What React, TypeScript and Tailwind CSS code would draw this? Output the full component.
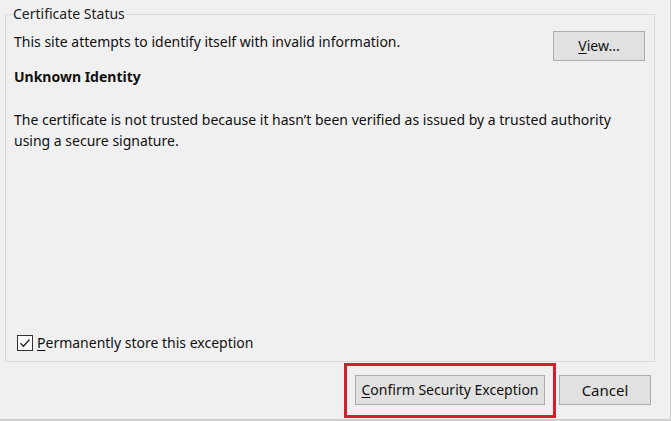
import React from "react";

function Btn({ children, className = "" }: { children: React.ReactNode; className?: string }) {
  return (
    <button
      className={`h-[30px] bg-[#e1e1e1] border border-[#adadad] text-[14px] leading-none text-[#111] whitespace-nowrap px-0 flex items-center justify-center ${className}`}
    >
      {children}
    </button>
  );
}

export default function App() {
  return (
    <div
      className="w-[671px] h-[421px] bg-[#f0f0f0] flex flex-col border-r border-b-2 border-[#cfcfcf] overflow-hidden text-[#111]"
      style={{ fontFamily: '"Noto Sans", "Open Sans", sans-serif' }}
    >
      <fieldset className="ml-[5px] mt-[4px] w-[650px] h-[358px] border border-[#d9d9d9] min-w-0">
        <legend className="ml-[6px] px-[1px] text-[14px] leading-[20px] text-[#222]">Certificate Status</legend>
        <div className="flex flex-col h-[337px] pl-[8px] pr-[9px]">
          <div className="flex justify-between items-start mt-[7px]">
            <div className="text-[14px] leading-[20px] mt-[1px]">
              This site attempts to identify itself with invalid information.
            </div>
            <Btn className="w-[92px]">
              <span>
                <u className="underline-offset-2">V</u>iew...
              </span>
            </Btn>
          </div>
          <div className="mt-[6px] text-[14px] leading-[20px] font-bold">Unknown Identity</div>
          <p className="mt-[22px] text-[14px] leading-[21px] w-[600px]">
            The certificate is not trusted because it hasn’t been verified as issued by a trusted authority using a
            secure signature.
          </p>
          <label className="mt-auto mb-[8px] ml-[3px] flex items-center gap-[4px] text-[14px] leading-[20px]">
            <span className="w-[16px] h-[16px] border border-[#333] bg-[#fafafa] flex items-center justify-center">
              <svg width="12" height="12" viewBox="0 0 12 12" fill="none">
                <path d="M1.5 6.2 L4.5 9.2 L10.5 2.5" stroke="#222" strokeWidth="1.3" />
              </svg>
            </span>
            <span>
              <u className="underline-offset-2">P</u>ermanently store this exception
            </span>
          </label>
        </div>
      </fieldset>
      <div className="flex justify-end items-start pr-[19px] mt-[1px]">
        <div className="border-[3px] border-[#d3202f] pt-[9px] pb-[10px] px-[8px]">
          <Btn className="w-[190px]">
            <span>
              <u className="underline-offset-2">C</u>onfirm Security Exception
            </span>
          </Btn>
        </div>
        <Btn className="w-[92px] ml-[3px] mt-[12px] text-[15px]">Cancel</Btn>
      </div>
    </div>
  );
}
